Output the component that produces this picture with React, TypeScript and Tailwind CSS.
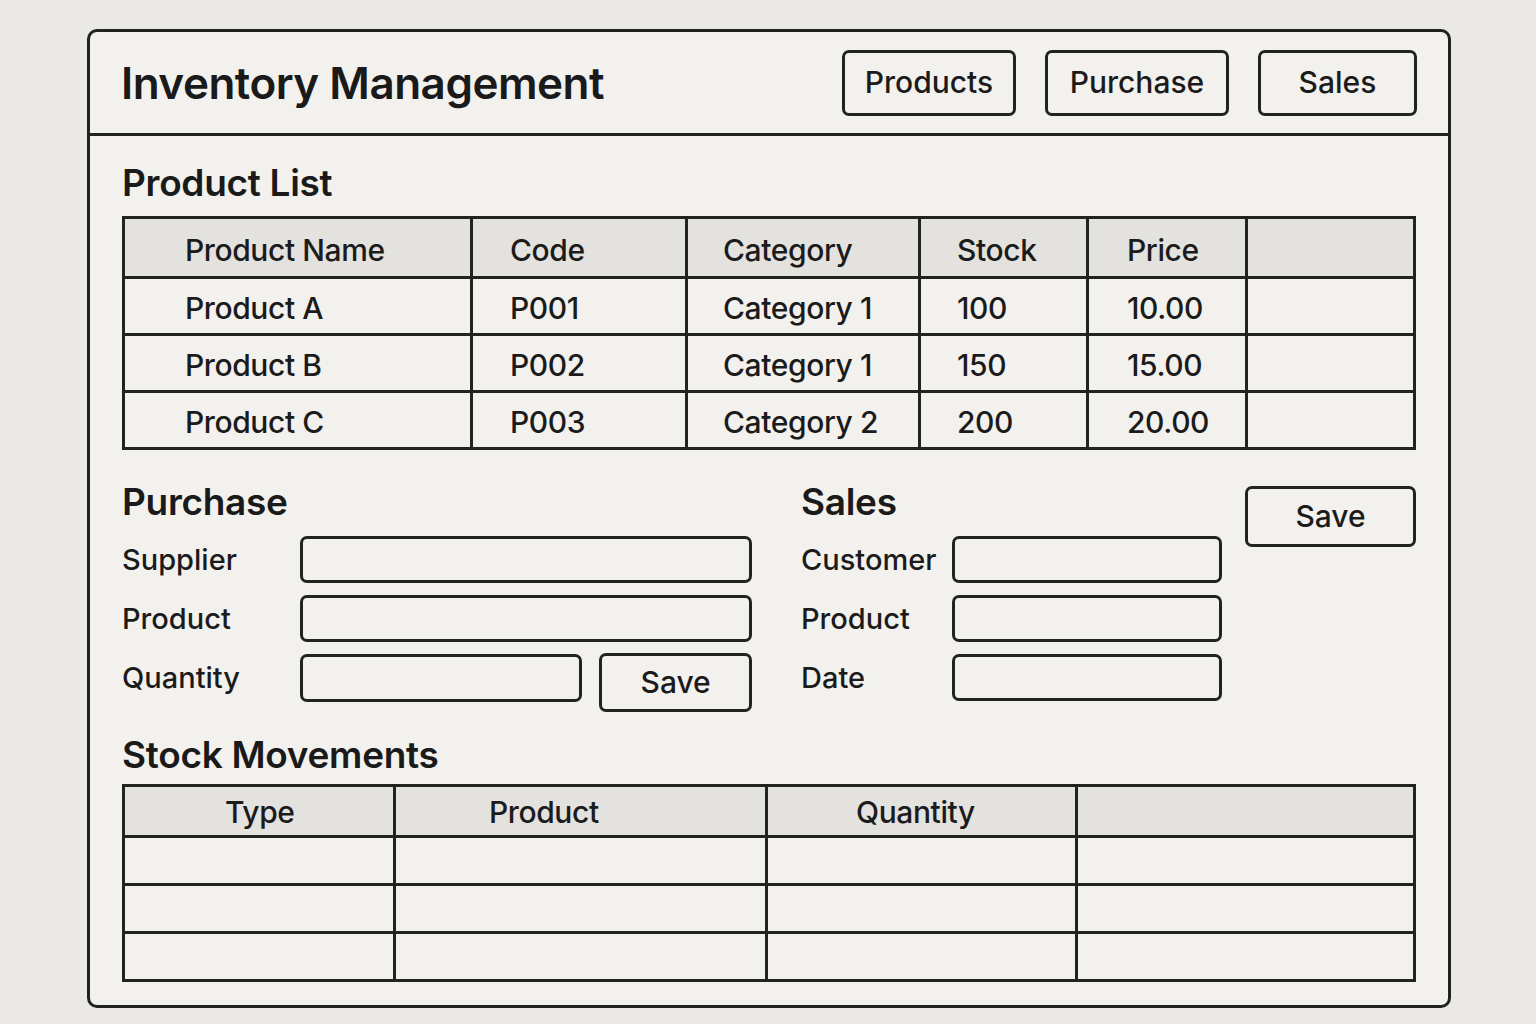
const products = [
  { name: "Product A", code: "P001", category: "Category 1", stock: "100", price: "10.00" },
  { name: "Product B", code: "P002", category: "Category 1", stock: "150", price: "15.00" },
  { name: "Product C", code: "P003", category: "Category 2", stock: "200", price: "20.00" },
];

function NavButton({ label, width }: { label: string; width: string }) {
  return (
    <button className={`${width} h-[66px] border-[3px] border-[#222] rounded-[7px] text-[30px] font-medium text-[#1b1b1b] flex items-center justify-center`}>
      {label}
    </button>
  );
}

function Field({ label, labelW, inputW }: { label: string; labelW: string; inputW: string }) {
  return (
    <div className="flex items-center h-[47px]">
      <div className={`${labelW} text-[29px] font-medium text-[#1b1b1b]`}>{label}</div>
      <div className={`${inputW} h-[47px] border-[3px] border-[#222] rounded-[7px] bg-[#f2f1ee]`} />
    </div>
  );
}

export default function App() {
  return (
    <div className="w-screen h-screen bg-[#eae9e5] pt-[29px] pl-[87px]" style={{ fontFamily: "Inter, 'Noto Sans', sans-serif" }}>
      <div className="w-[1364px] h-[979px] border-[3px] border-[#222] rounded-[10px] bg-[#f2f1ee] flex flex-col">
        {/* header */}
        <div className="h-[104px] border-b-[3px] border-[#222] flex items-center justify-between pl-[31px] pr-[31px]">
          <h1 className="text-[44px] font-semibold tracking-[-0.5px] text-[#1a1a1a]">Inventory Management</h1>
          <div className="flex gap-[29px]">
            <NavButton label="Products" width="w-[174px]" />
            <NavButton label="Purchase" width="w-[184px]" />
            <NavButton label="Sales" width="w-[159px]" />
          </div>
        </div>

        <div className="px-[32px] pt-[25px]">
          <h2 className="text-[37px] leading-[44px] font-semibold tracking-[-0.3px] text-[#1a1a1a]">Product List</h2>

          <div className="mt-[11px] border-[3px] border-[#222] text-[30px] font-medium tracking-[-0.4px] text-[#1b1b1b]">
            <div className="flex h-[60px] bg-[#e3e2df] border-b-[3px] border-[#222]">
              <div className="w-[348px] border-r-[3px] border-[#222] pl-[60px] pt-[5px] flex items-center">Product Name</div>
              <div className="w-[215px] border-r-[3px] border-[#222] pl-[37px] pt-[5px] flex items-center">Code</div>
              <div className="w-[233px] border-r-[3px] border-[#222] pl-[35px] pt-[5px] flex items-center">Category</div>
              <div className="w-[168px] border-r-[3px] border-[#222] pl-[36px] pt-[5px] flex items-center">Stock</div>
              <div className="w-[159px] border-r-[3px] border-[#222] pl-[38px] pt-[5px] flex items-center">Price</div>
              <div className="flex-1" />
            </div>
            {products.map((p, i) => (
              <div key={p.code} className={`flex ${i < products.length - 1 ? "h-[57px] border-b-[3px] border-[#222]" : "h-[54px]"}`}>
                <div className="w-[348px] border-r-[3px] border-[#222] pl-[60px] pt-[4px] flex items-center">{p.name}</div>
                <div className="w-[215px] border-r-[3px] border-[#222] pl-[37px] pt-[4px] flex items-center">{p.code}</div>
                <div className="w-[233px] border-r-[3px] border-[#222] pl-[35px] pt-[4px] flex items-center">{p.category}</div>
                <div className="w-[168px] border-r-[3px] border-[#222] pl-[36px] pt-[4px] flex items-center">{p.stock}</div>
                <div className="w-[159px] border-r-[3px] border-[#222] pl-[38px] pt-[4px] flex items-center">{p.price}</div>
                <div className="flex-1" />
              </div>
            ))}
          </div>

          {/* purchase / sales */}
          <div className="flex mt-[30px]">
            <div className="w-[630px]">
              <h2 className="text-[37px] leading-[44px] font-semibold tracking-[-0.3px] text-[#1a1a1a]">Purchase</h2>
              <div className="mt-[12px] flex flex-col gap-[12px]">
                <Field label="Supplier" labelW="w-[178px]" inputW="w-[452px]" />
                <Field label="Product" labelW="w-[178px]" inputW="w-[452px]" />
                <div className="flex items-start">
                  <div className="w-[178px] h-[47px] flex items-center text-[29px] font-medium text-[#1b1b1b]">Quantity</div>
                  <div className="w-[283px] h-[48px] border-[3px] border-[#222] rounded-[7px]" />
                  <button className="ml-[17px] w-[153px] h-[59px] -mt-[1px] border-[3px] border-[#222] rounded-[7px] text-[30px] font-medium text-[#1b1b1b] flex items-center justify-center">
                    Save
                  </button>
                </div>
              </div>
            </div>

            <div className="ml-[49px] w-[421px]">
              <h2 className="text-[37px] leading-[44px] font-semibold tracking-[-0.3px] text-[#1a1a1a]">Sales</h2>
              <div className="mt-[12px] flex flex-col gap-[12px]">
                <Field label="Customer" labelW="w-[151px]" inputW="w-[270px]" />
                <Field label="Product" labelW="w-[151px]" inputW="w-[270px]" />
                <Field label="Date" labelW="w-[151px]" inputW="w-[270px]" />
              </div>
            </div>

            <button className="ml-auto mt-[6px] w-[171px] h-[61px] border-[3px] border-[#222] rounded-[7px] text-[30px] font-medium text-[#1b1b1b] flex items-center justify-center">
              Save
            </button>
          </div>

          {/* stock movements */}
          <h2 className="mt-[21px] text-[37px] leading-[44px] font-semibold tracking-[-0.3px] text-[#1a1a1a]">Stock Movements</h2>
          <div className="mt-[7px] border-[3px] border-[#222] text-[30px] font-medium tracking-[-0.4px] text-[#1b1b1b]">
            <div className="flex h-[51px] bg-[#e3e2df] border-b-[3px] border-[#222]">
              <div className="w-[271px] border-r-[3px] border-[#222] pl-[100px] pt-[3px] flex items-center">Type</div>
              <div className="w-[372px] border-r-[3px] border-[#222] pl-[93px] pt-[3px] flex items-center">Product</div>
              <div className="w-[310px] border-r-[3px] border-[#222] pl-[88px] pt-[3px] flex items-center">Quantity</div>
              <div className="flex-1" />
            </div>
            {[0, 1, 2].map((i) => (
              <div key={i} className={`flex ${i < 2 ? "h-[48px] border-b-[3px] border-[#222]" : "h-[45px]"}`}>
                <div className="w-[271px] border-r-[3px] border-[#222]" />
                <div className="w-[372px] border-r-[3px] border-[#222]" />
                <div className="w-[310px] border-r-[3px] border-[#222]" />
                <div className="flex-1" />
              </div>
            ))}
          </div>
        </div>
      </div>
    </div>
  );
}
